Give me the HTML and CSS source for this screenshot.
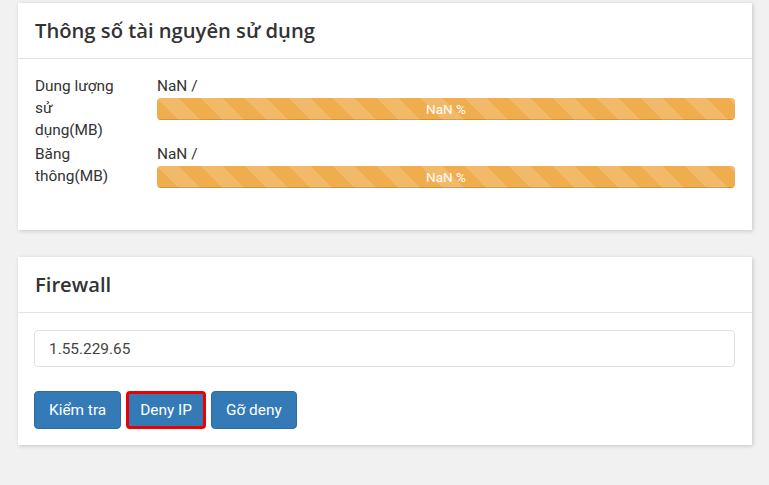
FILE: index.html
```html
<!DOCTYPE html>
<html lang="vi">
<head>
  <meta charset="UTF-8" />
  <meta name="viewport" content="width=device-width, initial-scale=1.0" />
  <title>Thông số tài nguyên</title>
  <link rel="stylesheet" href="styles.css">
</head>
<body>
  <div class="panel">
    <div class="panel-heading">
      <h3>Thông số tài nguyên sử dụng</h3>
    </div>
    <div class="panel-body stats">
      <div class="stat-row">
        <div class="stat-label">Dung lượng sử dụng(MB)</div>
        <div class="stat-value">
          <div>NaN /</div>
          <div class="progress">
            <div class="progress-bar" style="width: 100%">NaN %</div>
          </div>
        </div>
      </div>
      <div class="stat-row">
        <div class="stat-label">Băng thông(MB)</div>
        <div class="stat-value">
          <div>NaN /</div>
          <div class="progress">
            <div class="progress-bar" style="width: 100%">NaN %</div>
          </div>
        </div>
      </div>
    </div>
  </div>

  <div class="panel">
    <div class="panel-heading">
      <h3>Firewall</h3>
    </div>
    <div class="panel-body">
      <input type="text" class="ip-input" id="ip" value="1.55.229.65">
      <div class="button-group">
        <button class="btn">Kiểm tra</button>
        <button class="btn btn-marked">Deny IP</button>
        <button class="btn">Gỡ deny</button>
      </div>
    </div>
  </div>
</body>
</html>
```

FILE: styles.css
```css
body {
  font-family: Roboto, "Liberation Sans", Arial, sans-serif;
  font-size: 15.4px;
  line-height: 22px;
  color: #333;
  background-color: #f1f1f1;
  margin: 0;
  padding: 3px 17px 20px 18px;
}
.panel {
  background-color: #ffffff;
  box-shadow: 1px 1px 4px rgba(0,0,0,0.18);
  margin-bottom: 27px;
}
.panel-heading {
  padding: 15px 17px;
  border-bottom: 1px solid #e4e4e4;
}
.panel-heading h3 {
  margin: 0;
  font-family: "Open Sans", "DejaVu Sans", sans-serif;
  font-weight: 600;
  font-size: 20.2px;
  line-height: 25px;
  color: #333;
}
.panel-body {
  padding: 17px 17px 16px 16px;
}
.stats {
  padding: 16px 17px 40px 17px;
}
.stat-row {
  display: flex;
  margin-bottom: 2px;
}
.stat-label {
  width: 86px;
  flex: none;
  padding-right: 36px;
}
.stat-value {
  flex: 1;
}
.progress {
  height: 22px;
  margin-top: 1px;
  border-radius: 4px;
  overflow: hidden;
  background-color: #f5f5f5;
}
.progress-bar {
  height: 100%;
  background-color: #f0ad4e;
  background-image: linear-gradient(45deg, rgba(255,255,255,.15) 25%, transparent 25%, transparent 50%, rgba(255,255,255,.15) 50%, rgba(255,255,255,.15) 75%, transparent 75%, transparent);
  background-size: 44px 44px;
  box-shadow: inset 0 -1px 0 rgba(0,0,0,.15);
  color: #fff;
  font-size: 13.5px;
  line-height: 22px;
  text-align: center;
}
.ip-input {
  display: block;
  box-sizing: border-box;
  width: 100%;
  height: 37px;
  padding: 0 14px;
  border: 1px solid #e2e2e2;
  border-radius: 4px;
  font-family: Roboto, "Liberation Sans", Arial, sans-serif;
  font-size: 15.4px;
  color: #444;
  outline: none;
}
.button-group {
  display: flex;
  gap: 5px;
  margin-top: 24px;
}
.btn {
  height: 38px;
  padding: 0 14px;
  border: 1px solid #2e6da4;
  border-radius: 4px;
  background-color: #337ab7;
  color: #fff;
  font-family: Roboto, "Liberation Sans", Arial, sans-serif;
  font-size: 15.4px;
  cursor: pointer;
}
.btn-marked {
  border: 3px solid #ec0000;
  padding: 0 11px;
}
```
